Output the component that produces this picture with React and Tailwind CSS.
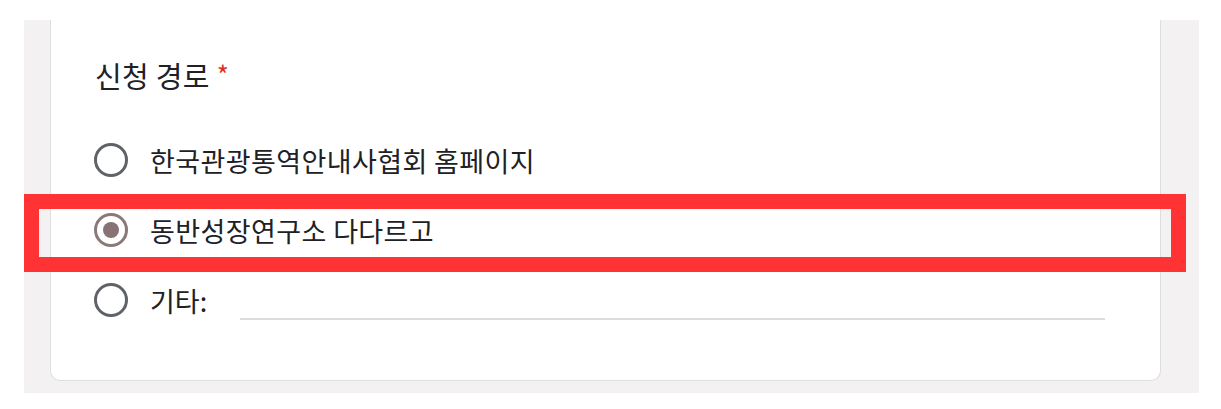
import React, { useState } from 'react';

const options = [
  { id: 'kita', label: '한국관광통역안내사협회 홈페이지' },
  { id: 'dada', label: '동반성장연구소 다다르고' },
];

const Radio = ({ checked }) => (
  <svg width="34" height="34" viewBox="0 0 34 34" className="shrink-0">
    <circle
      cx="17"
      cy="17"
      r="15.5"
      fill="none"
      stroke={checked ? '#8a7979' : '#5f6368'}
      strokeWidth="3"
    />
    {checked && <circle cx="17" cy="17" r="8" fill="#877373" />}
  </svg>
);

export default function App() {
  const [selected, setSelected] = useState('dada');
  const [other, setOther] = useState('');

  return (
    <div
      className="relative w-[1221px] h-[409px] bg-white pt-[20px] pl-[24px] text-[#202124]"
      style={{ fontFamily: '"Noto Sans CJK KR", "Noto Sans", sans-serif' }}
    >
      {/* Form background */}
      <div className="w-[1175px] h-[373px] bg-[#f3f1f2] pl-[26px]">
        {/* Question card */}
        <div className="w-[1111px] h-[361px] bg-white border-x border-b border-[#dedde0] rounded-b-[10px] pt-[35px] pl-[43px]">
          <div className="h-[40px] flex items-center pl-[1px]">
            <span className="text-[29px] leading-none tracking-[0.3px]">신청 경로</span>
            <span className="ml-[7px] text-[26px] leading-none text-[#d93025] -mt-[2px]">*</span>
          </div>

          <div className="mt-[30px] flex flex-col">
            {options.map((opt) => (
              <label
                key={opt.id}
                className="h-[70px] flex items-center gap-[22px] cursor-pointer"
                onClick={() => setSelected(opt.id)}
              >
                <Radio checked={selected === opt.id} />
                <span className="text-[27px] leading-none tracking-[0.4px]">{opt.label}</span>
              </label>
            ))}

            <div className="h-[70px] flex items-center">
              <div
                className="flex items-center gap-[22px] w-[146px] cursor-pointer"
                onClick={() => setSelected('other')}
              >
                <Radio checked={selected === 'other'} />
                <span className="text-[27px] leading-none">기타:</span>
              </div>
              <input
                value={other}
                onChange={(e) => setOther(e.target.value)}
                className="w-[865px] h-[40px] border-b-2 border-[#dcdcdc] outline-none text-[22px]"
              />
            </div>
          </div>
        </div>
      </div>

      {/* Highlight annotation */}
      <div className="absolute left-[24px] top-[194px] w-[1162px] h-[78px] border-[15px] border-[#ff3333] pointer-events-none" />
    </div>
  );
}
